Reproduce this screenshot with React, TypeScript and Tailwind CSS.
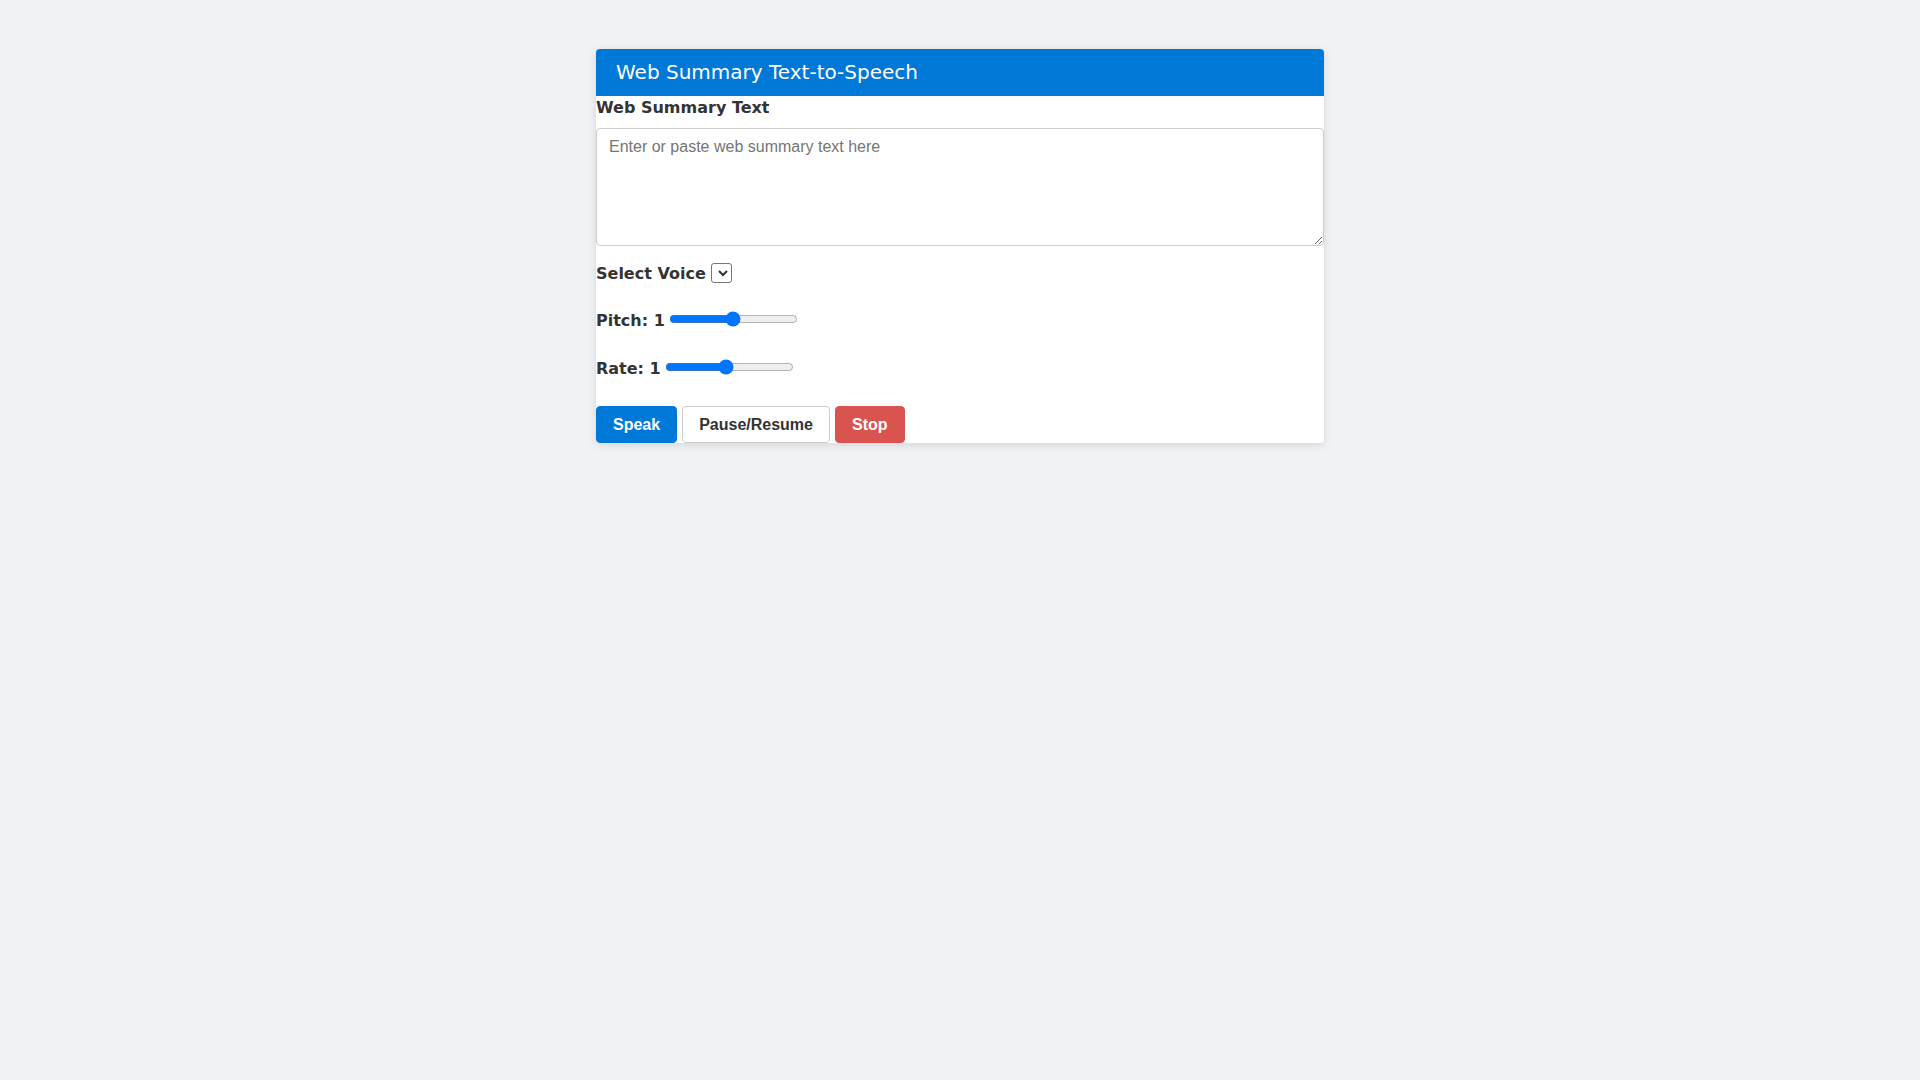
export default function App() {
  return (
    <div className="min-h-screen bg-[#f0f2f5] pt-[49px]">
      <div className="mx-auto w-[728px] rounded bg-white shadow-[0_2px_8px_rgba(0,0,0,0.12)] font-['DejaVu_Sans',sans-serif] text-[#333]">
        {/* Header */}
        <div className="flex h-[47px] items-center rounded-t bg-[#0078d7] pb-[2px] pl-5 text-[20px] text-white">
          Web Summary Text-to-Speech
        </div>

        {/* Summary text */}
        <label className="block text-[16px] leading-[24px] font-bold">Web Summary Text</label>
        <textarea
          className="mt-2 block h-[118px] w-full rounded border border-[#ccc] px-3 py-2 font-['Liberation_Sans',Arial,sans-serif] text-[16px] leading-[20px] text-[#333] placeholder:text-[#757575] outline-none"
          placeholder="Enter or paste web summary text here"
        />

        {/* Voice */}
        <div className="mt-[15px] flex h-6 items-center gap-[5px] text-[16px] font-bold">
          <span className="pt-[2px]">Select Voice</span>
          <select className="h-5 w-[21px] rounded-[3px] border border-[#767676] bg-white text-[13px]"></select>
        </div>

        {/* Pitch */}
        <div className="mt-[22px] flex h-6 items-center gap-1 text-[16px] font-bold">
          <span className="pt-1">Pitch: 1</span>
          <input type="range" min={0} max={2} step={0.1} defaultValue={1} className="w-[129px]" />
        </div>

        {/* Rate */}
        <div className="mt-6 flex h-6 items-center gap-1 text-[16px] font-bold">
          <span className="pt-1">Rate: 1</span>
          <input type="range" min={0.1} max={2} step={0.1} defaultValue={1} className="w-[129px]" />
        </div>

        {/* Controls */}
        <div className="mt-[27px] flex gap-[5px] font-['Liberation_Sans',Arial,sans-serif] text-[16px] font-bold">
          <button className="h-[37px] rounded border border-[#0078d7] bg-[#0078d7] px-4 text-white">Speak</button>
          <button className="h-[37px] rounded border border-[#ccc] bg-white px-4 text-[#333]">Pause/Resume</button>
          <button className="h-[37px] rounded border border-[#d9534f] bg-[#d9534f] px-4 text-white">Stop</button>
        </div>
      </div>
    </div>
  )
}
